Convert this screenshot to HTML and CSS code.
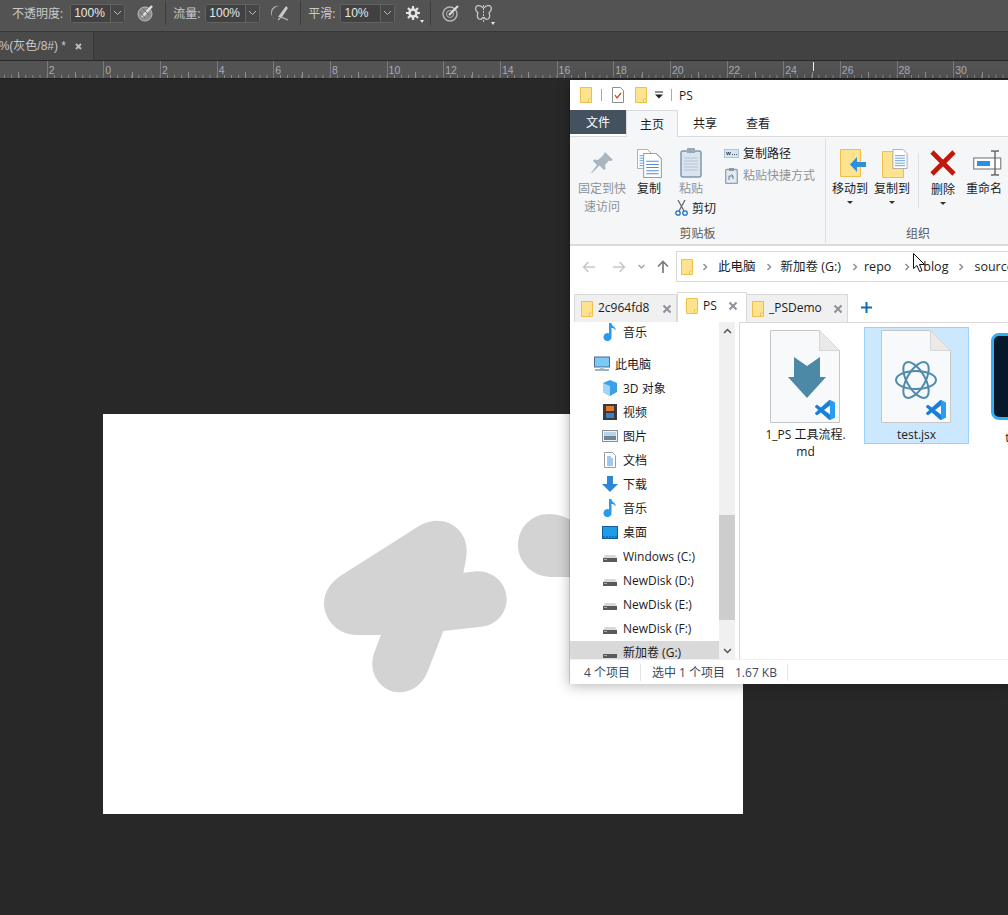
FILE: index.html
```html
<!DOCTYPE html>
<html lang="zh-CN">
<head>
<meta charset="utf-8">
<title>PS</title>
<link rel="stylesheet" href="styles.css">
</head>
<body>
<svg class="defs" width="0" height="0" aria-hidden="true">
  <symbol id="folder" viewBox="0 0 12 16"><path d="M.5.5h11v15H.5z" fill="#fde28f" stroke="#eec04a"/><path d="M8.5 15.5v-3.5h3" fill="#fff2c4" stroke="#eec04a"/></symbol>
  <symbol id="vsc" viewBox="0 0 24 24"><path fill="#1b7fd8" d="M23.15 2.587L18.21.21a1.494 1.494 0 0 0-1.705.29l-9.46 8.63-4.12-3.128a.999.999 0 0 0-1.276.057L.327 7.261A1 1 0 0 0 .326 8.74L3.899 12 .326 15.26a1 1 0 0 0 .001 1.479L1.65 17.94a.999.999 0 0 0 1.276.057l4.12-3.128 9.46 8.63a1.492 1.492 0 0 0 1.704.29l4.942-2.377A1.5 1.5 0 0 0 24 20.06V3.939a1.5 1.5 0 0 0-.85-1.352zm-5.146 14.861L10.826 12l7.178-5.448v10.896z"/><path fill="#2a9df0" d="M18 .1l5.2 2.5c.5.3.8.8.8 1.35v16.1c0 .55-.3 1.05-.8 1.35L18 23.9z"/></symbol>
  <symbol id="drive" viewBox="0 0 16 16"><path d="M3 7h10l2 3H1z" fill="#d8d8d8"/><rect x="1" y="10" width="14" height="4" fill="#5a5a5a"/><rect x="2" y="11" width="3" height="1" fill="#aaa"/></symbol>
  <symbol id="note" viewBox="0 0 16 18"><path d="M7 0h2.500c0 3.500 4.500 3.500 4.500 7.500-1.500-2-3-2.500-4.500-2.500v9a4 4 0 1 1-2.500-3.600z" fill="#2a9bea"/></symbol>
  <symbol id="closex" viewBox="0 0 10 10"><path d="M1.500 1.500l7 7m0-7l-7 7" stroke="#8b9199" stroke-width="2" fill="none"/></symbol>
  <symbol id="chev" viewBox="0 0 6 8"><path d="M1.500 1l3 3-3 3" stroke="#8a8a8a" stroke-width="1.400" fill="none"/></symbol>
  <symbol id="page" viewBox="0 0 70 93"><path d="M.5.5h49l20 20v72H.5z" fill="#f8f9fa" stroke="#c4c7c9"/><path d="M49.500.5v20h20z" fill="#e9e9e9" stroke="#d6d6d6"/></symbol>
  <symbol id="lines" viewBox="0 0 18 24"><path d="M.5.500h12l5 5v18H.5z" fill="#fff" stroke="#9a9da0"/><path d="M3 8h12M3 11h12M3 14h12M3 17h12M3 20h12" stroke="#4f8fd6"/></symbol>
</svg>

<div class="app">
  <div class="options">
    <span class="opt-label first">不透明度:</span>
    <span class="combo"><span class="combo-val">100%</span><span class="combo-arrow"><svg width="9" height="6" viewBox="0 0 9 6"><path d="M1 1l3.500 3.500L8 1" stroke="#bbb" fill="none"/></svg></span></span>
    <svg class="tool i-a" width="18" height="18" viewBox="0 0 18 18"><circle cx="8" cy="10" r="7" fill="#8b8b8b" stroke="#bdbdbd"/><path d="M5 13L15 2" stroke="#e0e0e0" stroke-width="2.500"/><path d="M3 8l5 6M6 5l6 6" stroke="#666"/></svg>
    <span class="opt-sep s-a"></span>
    <span class="opt-label">流量:</span>
    <span class="combo"><span class="combo-val">100%</span><span class="combo-arrow"><svg width="9" height="6" viewBox="0 0 9 6"><path d="M1 1l3.500 3.500L8 1" stroke="#bbb" fill="none"/></svg></span></span>
    <svg class="tool i-b" width="19" height="18" viewBox="0 0 19 18"><path d="M8 2a8 8 0 0 0-6 12l3 1a6 6 0 0 1 3-13z" fill="#a8a8a8"/><path d="M7 13L15 2l2 2-6 9z" fill="#c8c8c8"/><path d="M7 16l3-3 7 3" stroke="#bbb" stroke-width="1.300" fill="none"/></svg>
    <span class="opt-sep s-b"></span>
    <span class="opt-label">平滑:</span>
    <span class="combo"><span class="combo-val">10%</span><span class="combo-arrow"><svg width="9" height="6" viewBox="0 0 9 6"><path d="M1 1l3.500 3.500L8 1" stroke="#bbb" fill="none"/></svg></span></span>
    <span class="gear">
      <svg width="14" height="14" viewBox="0 0 14 14"><circle cx="7" cy="7" r="3.500" fill="none" stroke="#e4e4e4" stroke-width="2.600"/><path d="M7 0v3M7 11v3M0 7h3M11 7h3M2 2l2 2M10 10l2 2M12 2l-2 2M4 10l-2 2" stroke="#e4e4e4" stroke-width="2.200"/></svg>
      <i class="tri"></i>
    </span>
    <span class="opt-sep s-c"></span>
    <svg class="tool i-c" width="18" height="18" viewBox="0 0 18 18"><circle cx="8" cy="10" r="7" fill="none" stroke="#b5b5b5" stroke-width="1.500"/><circle cx="8" cy="10" r="3.500" fill="none" stroke="#b5b5b5"/><path d="M7 11L16 2" stroke="#dcdcdc" stroke-width="2.200"/></svg>
    <span class="butterfly">
      <svg width="17" height="17" viewBox="0 0 17 17"><path d="M8 3C6 0 2 0 1 2s1 5 2 6c-1 2-1 5 1 6s3 0 4-2M9 3c2-3 6-3 7-1s-1 5-2 6c1 2 1 5-1 6s-3 0-4-2" fill="none" stroke="#c4c4c4" stroke-width="1.300"/><path d="M8.500 0v17" stroke="#c4c4c4" stroke-dasharray="2 1"/></svg>
      <i class="tri"></i>
    </span>
  </div>

  <div class="doc-tabs">
    <div class="doc-tab"><span class="doc-tab-name">%(灰色/8#) *</span><svg class="doc-close" width="7" height="7" viewBox="0 0 7 7"><path d="M1 1l5 5m0-5L1 6" stroke="#bdbdbd" stroke-width="1.800"/></svg></div>
  </div>

  <div class="ruler">
    <span class="tick"></span><span class="tick"><b>2</b></span><span class="tick"><b>0</b></span><span class="tick"><b>2</b></span><span class="tick"><b>4</b></span><span class="tick"><b>6</b></span><span class="tick"><b>8</b></span><span class="tick"><b>10</b></span><span class="tick"><b>12</b></span><span class="tick"><b>14</b></span><span class="tick"><b>16</b></span><span class="tick"><b>18</b></span><span class="tick"><b>20</b></span><span class="tick"><b>22</b></span><span class="tick"><b>24</b></span><span class="tick"><b>26</b></span><span class="tick"><b>28</b></span><span class="tick"><b>30</b></span>
    <i class="ruler-mark"></i>
  </div>

  <div class="pasteboard">
    <div class="artboard">
      <svg class="art" width="640" height="400" viewBox="103 414 640 400">
        <path fill="#d3d3d3" d="M341.700 575L410 531.700C418 526 427 520.700 436.700 520.700C454 520.700 466.700 534 466.700 550C466.700 558 465 565 463.300 572.700L476.700 571.300C494 571 506.700 584 506.700 599.300C506.700 614 495 625.500 481.700 626.700L443.300 631L428.300 670C423 684 412 692.300 399.300 692.300C384 692.300 372.300 679 372.300 663.300C372.300 660 373 656.500 374 653.300L381 635H356.700C338 635 324 620 324 603.300C324 592 331 582 341.700 575Z"/>
        <path fill="#d3d3d3" d="M518 545C518 527 532 514 549 514C558 514 566 517 572 521L600 560V577H552C532 577 518 562 518 545Z"/>
      </svg>
    </div>
  </div>
</div>

<section class="explorer">
  <div class="titlebar">
    <svg class="ti ti-1" width="12" height="16"><use href="#folder"/></svg>
    <i class="t-sep"></i>
    <svg class="ti ti-2" width="12" height="16" viewBox="0 0 12 16"><path d="M.5.500h8l3 3v12H.5z" fill="#fff" stroke="#8e8e8e"/><path d="M3 8l2 3 4-5" stroke="#d0441f" stroke-width="1.300" fill="none"/></svg>
    <svg class="ti ti-3" width="12" height="16"><use href="#folder"/></svg>
    <svg class="ti ti-4" width="8" height="8" viewBox="0 0 8 8"><path d="M0 1h8" stroke="#222"/><path d="M0 3.500h8L4 7.500z" fill="#222"/></svg>
    <i class="t-sep s2"></i>
    <span class="wtitle">PS</span>
  </div>

  <div class="menutabs">
    <span class="mt file">文件</span>
    <span class="mt active">主页</span>
    <span class="mt share">共享</span>
    <span class="mt view">查看</span>
  </div>

  <div class="ribbon">
    <div class="group g-clip">
      <div class="group-body">
        <div class="big pin dim">
          <span class="big-icon"><svg width="22" height="22" viewBox="0 0 22 22"><path d="M14 0l8 8-2 1-2-.500-4 4.500 .500 4-1.500 1-4.500-4.500L1 21l-1 0 6-8-4-4 1-1.500 4 .500 4.500-4L13 2z" fill="#a9b5bf"/></svg></span>
          <span class="big-text">固定到快<br>速访问</span>
        </div>
        <div class="big copy">
          <span class="big-icon"><svg width="25" height="29" viewBox="0 0 25 29"><use href="#lines" x="0" y="0" width="15" height="20"/><use href="#lines" x="6" y="4" width="19" height="25"/></svg></span>
          <span class="big-text">复制</span>
        </div>
        <div class="paste-col">
          <div class="big paste dim">
            <span class="big-icon"><svg width="22" height="30" viewBox="0 0 22 30"><rect x="1" y="3" width="20" height="26" rx="2" fill="#dbe4ee" stroke="#7f97b0" stroke-width="1.500"/><rect x="7" y="0" width="8" height="5" fill="#9aa9b8"/><path d="M4 10h14M4 13h14M4 16h14M4 19h14M4 22h14" stroke="#b3c3d6"/></svg></span>
            <span class="big-text">粘贴</span>
          </div>
          <div class="cut">
            <svg width="13" height="16" viewBox="0 0 13 16"><path d="M3 0l6 11M10 0L4 11" stroke="#6a6a6a" stroke-width="1.300"/><circle cx="3" cy="13" r="2.200" fill="none" stroke="#1f6fc4" stroke-width="1.300"/><circle cx="10" cy="13" r="2.200" fill="none" stroke="#1f6fc4" stroke-width="1.300"/></svg>
            <span>剪切</span>
          </div>
        </div>
        <div class="small-col">
          <div class="small"><svg width="15" height="9" viewBox="0 0 15 9"><rect x=".5" y=".5" width="14" height="8" fill="#cfe6f8" stroke="#a9c4dc"/><path d="M2.500 3l1 3 1-3 1 3 1-3M8 5.500h1M10 5.500h1M12 5.500h1" stroke="#333" fill="none" stroke-width=".8"/></svg><span>复制路径</span></div>
          <div class="small dim"><svg width="13" height="16" viewBox="0 0 13 16"><rect x=".7" y="1.500" width="11.600" height="14" rx="1" fill="#e3e9ef" stroke="#8ea3b6" stroke-width="1.300"/><rect x="4" y="0" width="5" height="3" fill="#8a9aaa"/><path d="M4 12V8h4l-1.500-1.500M8 8v3" stroke="#5f7f9f" fill="none"/></svg><span>粘贴快捷方式</span></div>
        </div>
      </div>
      <div class="group-label">剪贴板</div>
    </div>
    <div class="group g-org">
      <div class="group-body">
        <div class="big move">
          <span class="big-icon"><svg width="26" height="28" viewBox="0 0 26 28"><path d="M.5.500h20v27H.5z" fill="#fde28f" stroke="#eec04a"/><path d="M26 13h-9V8L10 15.500 17 23v-5h9z" fill="#2e8fdc"/></svg></span>
          <span class="big-text">移动到</span><i class="caret"></i>
        </div>
        <div class="big copyto">
          <span class="big-icon"><svg width="26" height="29" viewBox="0 0 26 29"><path d="M.5 2.500h21v26H.5z" fill="#fde28f" stroke="#eec04a"/><use href="#lines" x="10" y="0" width="16" height="20"/></svg></span>
          <span class="big-text">复制到</span><i class="caret"></i>
        </div>
        <i class="org-sep"></i>
        <div class="big del">
          <span class="big-icon"><svg width="26" height="26" viewBox="0 0 26 26"><path d="M2 2l22 22M24 2L2 24" stroke="#c2170c" stroke-width="4.600"/></svg></span>
          <span class="big-text">删除</span><i class="caret"></i>
        </div>
        <div class="big rename">
          <span class="big-icon"><svg width="29" height="26" viewBox="0 0 29 26"><rect x=".7" y="8" width="27" height="11" fill="#fff" stroke="#8f8f8f" stroke-width="1.300"/><rect x="4" y="11" width="13" height="5" fill="#2e8fdc"/><path d="M18 1h3l1 1 1-1h3M22 2v22M18 25h3l1-1 1 1h3" stroke="#666" stroke-width="1.400" fill="none"/></svg></span>
          <span class="big-text">重命名</span>
        </div>
      </div>
      <div class="group-label">组织</div>
    </div>
  </div>

  <div class="addressrow">
    <svg class="nav-a back" width="14" height="12" viewBox="0 0 14 12"><path d="M13 6H2M6.500 1L1.500 6l5 5" stroke="#c6c6c6" stroke-width="1.500" fill="none"/></svg>
    <svg class="nav-a fwd" width="14" height="12" viewBox="0 0 14 12"><path d="M1 6h11M7.500 1l5 5-5 5" stroke="#c6c6c6" stroke-width="1.500" fill="none"/></svg>
    <svg class="nav-a dn" width="7" height="5" viewBox="0 0 7 5"><path d="M.5 1l3 3 3-3" stroke="#9a9a9a" stroke-width="1.200" fill="none"/></svg>
    <svg class="nav-a up" width="12" height="13" viewBox="0 0 12 13"><path d="M6 13V2M1 6.500l5-5 5 5" stroke="#7b7b7b" stroke-width="1.700" fill="none"/></svg>
    <div class="addr">
      <svg class="addr-folder" width="12" height="16"><use href="#folder"/></svg>
      <svg class="c c1" width="6" height="8"><use href="#chev"/></svg><span class="crumb">此电脑</span>
      <svg class="c c2" width="6" height="8"><use href="#chev"/></svg><span class="crumb">新加卷 (G:)</span>
      <svg class="c c3" width="6" height="8"><use href="#chev"/></svg><span class="crumb">repo</span>
      <svg class="c c4" width="6" height="8"><use href="#chev"/></svg><span class="crumb">blog</span>
      <svg class="c c5" width="6" height="8"><use href="#chev"/></svg><span class="crumb">source</span>
    </div>
  </div>

  <div class="filetabs">
    <div class="ft ft1"><svg width="12" height="16"><use href="#folder"/></svg><span>2c964fd8</span><svg class="x" width="10" height="10"><use href="#closex"/></svg></div>
    <div class="ft ft2 on"><svg width="12" height="16"><use href="#folder"/></svg><span>PS</span><svg class="x" width="10" height="10"><use href="#closex"/></svg></div>
    <div class="ft ft3"><svg width="12" height="16"><use href="#folder"/></svg><span>_PSDemo</span><svg class="x" width="10" height="10"><use href="#closex"/></svg></div>
    <svg class="plus" width="11" height="11" viewBox="0 0 11 11"><path d="M5.500 0v11M0 5.500h11" stroke="#0f6cb4" stroke-width="2"/></svg>
  </div>

  <div class="main">
    <nav class="navpane">
      <div class="tree">
        <div class="row l2 first"><svg width="16" height="18"><use href="#note"/></svg><span>音乐</span></div>
        <div class="row l1"><svg width="16" height="16" viewBox="0 0 16 16"><rect x=".5" y="1" width="15" height="10" fill="#7cc9f5" stroke="#4a6f8c"/><rect x="1" y="13" width="14" height="2" fill="#9db3c4"/><rect x="6" y="11" width="4" height="2" fill="#b5c4d0"/></svg><span>此电脑</span></div>
        <div class="row l2"><svg width="16" height="16" viewBox="0 0 16 16"><path d="M8 0l7 3v9l-7 4-7-4V3z" fill="#3aa0e8"/><path d="M1 3l7 3v10l-7-4z" fill="#9fd6f7"/></svg><span>3D 对象</span></div>
        <div class="row l2"><svg class="vid" width="14" height="16" viewBox="0 0 14 16"><rect width="14" height="16" fill="#3b3b3b"/><rect x="3" y="2" width="8" height="5" fill="#e07b2e"/><rect x="3" y="9" width="8" height="5" fill="#3f7fc0"/></svg><span>视频</span></div>
        <div class="row l2"><svg width="16" height="12" viewBox="0 0 16 12"><rect x=".5" y=".5" width="15" height="11" fill="#eef3f7" stroke="#8e8e8e"/><rect x="2" y="2" width="12" height="4" fill="#b7d5ea"/><rect x="2" y="6" width="12" height="4" fill="#6f8594"/></svg><span>图片</span></div>
        <div class="row l2"><svg class="narrow" width="12" height="16" viewBox="0 0 12 16"><path d="M.5.500h8l3 3v12H.5z" fill="#fff" stroke="#9a9da0"/><path d="M3 5h4M3 7h6M3 9h6M3 11h6M3 13h6" stroke="#3f93dc"/></svg><span>文档</span></div>
        <div class="row l2"><svg width="16" height="16" viewBox="0 0 16 16"><path d="M5 0h6v8h5l-8 8-8-8h5z" fill="#2f86d8"/></svg><span>下载</span></div>
        <div class="row l2"><svg width="16" height="18"><use href="#note"/></svg><span>音乐</span></div>
        <div class="row l2"><svg width="16" height="13" viewBox="0 0 16 13"><rect x=".5" y=".5" width="15" height="12" fill="#1f9be8" stroke="#0f5f9f"/><path d="M1 11h14" stroke="#0b5488" stroke-dasharray="2 1"/></svg><span>桌面</span></div>
        <div class="row l2"><svg width="16" height="16"><use href="#drive"/></svg><span>Windows (C:)</span></div>
        <div class="row l2"><svg width="16" height="16"><use href="#drive"/></svg><span>NewDisk (D:)</span></div>
        <div class="row l2"><svg width="16" height="16"><use href="#drive"/></svg><span>NewDisk (E:)</span></div>
        <div class="row l2"><svg width="16" height="16"><use href="#drive"/></svg><span>NewDisk (F:)</span></div>
        <div class="row l2 sel"><svg width="16" height="16"><use href="#drive"/></svg><span>新加卷 (G:)</span></div>
      </div>
      <div class="scrollbar">
        <span class="sb-arrow"><svg width="9" height="6" viewBox="0 0 9 6"><path d="M1 5l3.500-3.500L8 5" stroke="#555" stroke-width="1.500" fill="none"/></svg></span>
        <span class="sb-space"></span>
        <span class="sb-thumb"></span>
        <span class="sb-fill"></span>
        <span class="sb-arrow"><svg width="9" height="6" viewBox="0 0 9 6"><path d="M1 1l3.500 3.500L8 1" stroke="#555" stroke-width="1.500" fill="none"/></svg></span>
      </div>
    </nav>
    <div class="files">
      <figure class="tile">
        <div class="thumb">
          <svg width="70" height="93"><use href="#page"/></svg>
          <svg class="glyph" width="38" height="41" viewBox="0 0 38 41"><path d="M6 0l13 9L32 0v20h6L19 41 0 20h6z" fill="#4c89a6"/></svg>
          <svg class="badge" width="20" height="20"><use href="#vsc"/></svg>
        </div>
        <figcaption>1_PS 工具流程.<br>md</figcaption>
      </figure>
      <figure class="tile selected">
        <div class="thumb">
          <svg width="70" height="93"><use href="#page"/></svg>
          <svg class="glyph atom" width="42" height="42" viewBox="0 0 42 42"><g fill="none" stroke="#4f8bab" stroke-width="2"><ellipse cx="21" cy="21" rx="20" ry="9"/><ellipse cx="21" cy="21" rx="20" ry="9" transform="rotate(60 21 21)"/><ellipse cx="21" cy="21" rx="20" ry="9" transform="rotate(120 21 21)"/></g></svg>
          <svg class="badge" width="20" height="20"><use href="#vsc"/></svg>
        </div>
        <figcaption>test.jsx</figcaption>
      </figure>
      <figure class="tile">
        <div class="thumb"><span class="psd"></span></div>
        <figcaption>test.psd</figcaption>
      </figure>
    </div>
  </div>

  <footer class="status">
    <span class="st st1">4 个项目</span>
    <span class="st st2">选中 1 个项目</span>
    <span class="st st3">1.67 KB</span>
  </footer>
</section>

<svg class="cursor" width="13" height="20" viewBox="0 0 13 20"><path d="M.5.500v15l3.500-3 2.500 6 2.500-1-2.500-6h5z" fill="#fff" stroke="#111"/></svg>
</body>
</html>
```

FILE: styles.css
```css
* { box-sizing: border-box; }
html, body { margin: 0; height: 915px; overflow: hidden; background: #282828; }
body { font: 12px/17px "Open Sans", "Noto Sans CJK SC", sans-serif; position: relative; }
.defs { position: absolute; }
.app { display: grid; grid-template-rows: 32px 29px 18px 1fr; height: 915px; width: 1008px; }

/* options bar */
.options { background: #535353; border-bottom: 1px solid #383838; display: flex; align-items: center; height: 32px; padding-bottom: 5px; color: #cfcfcf; }
.opt-label { font-size: 12px; margin-left: 7px; margin-right: 5px; white-space: nowrap; color: #c9c9c9; }
.opt-label.first { margin-left: 12px; margin-right: 7px; }
.combo { display: flex; width: 55px; height: 19px; border: 1px solid #636363; border-radius: 3px; background: #454545; }
.combo-val { width: 39px; color: #e8e8e8; font: 12px/17px "Liberation Sans", sans-serif; padding-left: 3px; background: #414141; border-radius: 2px 0 0 2px; }
.combo-arrow { flex: 1; border-left: 1px solid #636363; display: flex; align-items: center; justify-content: center; background: #474747; }
.tool { flex: none; }
.i-a { margin-left: 12px; }
.s-a { margin-left: 10px; }
.i-b { margin-left: 11px; }
.s-b { margin-left: 10px; }
.opt-sep { width: 1px; height: 24px; background: #3d3d3d; flex: none; }
.gear { position: relative; margin-left: 11px; display: flex; width: 15px; }
.tri { position: absolute; right: -3px; bottom: -3px; border: 2px solid transparent; border-top: 3px solid #e8e8e8; border-bottom: 0; }
.s-c { margin-left: 9px; }
.i-c { margin-left: 11px; }
.butterfly { position: relative; margin-left: 15px; display: flex; width: 17px; }

/* doc tab */
.doc-tabs { background: #424242; border-bottom: 1px solid #272727; height: 29px; }
.doc-tab { width: 94px; height: 28px; background: #4a4a4a; border-right: 1px solid #383838; display: flex; align-items: center; justify-content: flex-end; padding-right: 11px; overflow: hidden; white-space: nowrap; color: #c8c8c8; }
.doc-tab-name { font: 12px/16px "Liberation Sans", "Noto Sans CJK SC", sans-serif; margin-right: 9px; }
.doc-close { flex: none; }

/* ruler */
.ruler { background: #535353; border-bottom: 1px solid #222; display: flex; height: 18px; position: relative; overflow: hidden; }
.tick { flex: none; width: 56.67px; height: 17px; border-left: 1px solid #7a7a7a;
  background-image: linear-gradient(#8d8d8d, #8d8d8d), linear-gradient(90deg, #8d8d8d 1px, transparent 1px);
  background-size: 1px 6px, 7.08px 3px;
  background-position: 27.4px 100%, 6.1px 100%;
  background-repeat: no-repeat, repeat-x;
  color: #a9a9b8; font: 10.500px/13px "Liberation Sans", sans-serif; padding: 3px 0 0 1px; }
.tick:first-child { margin-left: -10px; }
.tick b { font-weight: 400; }
.ruler-mark { position: absolute; left: 813px; top: 1px; width: 1px; height: 9px; background: #eee; }

/* canvas */
.pasteboard { background: #282828; position: relative; }
.artboard { position: absolute; left: 103px; top: 335px; width: 640px; height: 400px; background: #fff; }
.art { display: block; }

/* explorer */
.explorer { position: absolute; left: 569px; top: 80px; width: 439px; height: 604px; background: #fff; border-left: 1px solid rgba(0,0,0,.12); background-clip: padding-box; box-shadow: 0 2px 12px rgba(0,0,0,.28); display: flex; flex-direction: column; color: #1c1c1c; }
.titlebar { height: 30px; display: flex; align-items: center; padding-left: 10px; flex: none; }
.t-sep { width: 1px; height: 12px; background: #a9a9a9; margin-left: 9px; }
.ti-2 { margin-left: 10px; }
.ti-3 { margin-left: 11px; }
.ti-4 { margin-left: 8px; }
.s2 { margin-left: 8px; }
.wtitle { margin-left: 7px; }
.menutabs { height: 27px; display: flex; align-items: stretch; border-bottom: 1px solid #dadbdc; flex: none; }
.mt { display: flex; align-items: center; justify-content: center; width: 52px; }
.mt.file { width: 56px; background: #44525f; color: #fff; height: 24px; }
.mt.active { background: #f5f6f7; border: 1px solid #dadbdc; border-bottom: 0; height: 27px; margin-bottom: -1px; position: relative; }
.mt.share { width: 54px; }
.mt.view { width: 52px; }
.ribbon { height: 109px; background: #f5f6f7; border-bottom: 2px solid #dadbdc; display: flex; flex: none; }
.group { display: flex; flex-direction: column; height: 105px; margin-top: 1px; flex: none; }
.group-body { flex: 1; display: flex; align-items: flex-start; padding-top: 8px; }
.group-label { height: 19px; text-align: center; color: #5b5b5b; line-height: 19px; }
.g-clip { width: 256px; border-right: 1px solid #dfe0e1; }
.g-org { width: 184px; }
.big { display: flex; flex-direction: column; align-items: center; flex: none; white-space: nowrap; }
.big-icon { height: 34px; display: flex; align-items: center; justify-content: center; }
.big-text { text-align: center; line-height: 17.500px; }
.dim, .dim .big-text { color: #8d9297; }
.pin { width: 48px; margin-left: 8px; }
.copy { width: 26px; margin-left: 10px; }
.paste-col { margin-left: 13px; width: 49px; display: flex; flex-direction: column; }
.paste { width: 30px; margin-left: 1px; }
.cut { display: flex; align-items: center; gap: 4px; margin-top: 2px; }
.small-col { display: flex; flex-direction: column; gap: 5px; margin-top: -1px; }
.small { display: flex; align-items: center; gap: 4px; white-space: nowrap; height: 17px; }
.small svg { width: 15px; }
.caret { width: 0; height: 0; border: 3px solid transparent; border-top: 3px solid #333; border-bottom: 0; margin-top: 3px; }
.move { width: 36px; margin-left: 6px; }
.copyto { width: 36px; margin-left: 6px; }
.move .big-icon, .copyto .big-icon { padding-left: 6px; }
.org-sep { width: 1px; height: 55px; background: #dfe0e1; margin: 7px 11px 0 8px; }
.del { width: 26px; }
.del .big-text { margin-top: 1px; }
.rename { width: 36px; margin-left: 10px; }
.rename .big-icon { padding-left: 6px; }
.addressrow { height: 45px; display: flex; align-items: center; flex: none; padding-bottom: 4px; }
.back { margin-left: 12px; }
.fwd { margin-left: 16px; }
.dn { margin-left: 12px; }
.up { margin-left: 12px; }
.addr { margin-left: 7px; flex: 1; height: 31px; border: 1px solid #d9d9d9; border-right: 0; display: flex; align-items: center; padding-left: 4px; white-space: nowrap; overflow: hidden; font-size: 12.500px; }
.addr-folder { flex: none; }
.c { flex: none; }
.c1 { margin: 0 10px 0 9px; }
.c2 { margin: 0 9px 0 10px; }
.c3 { margin: 0 6px 0 11px; }
.c4 { margin: 0 13px 0 13px; }
.c5 { margin: 0 10px 0 10px; }
.filetabs { height: 31px; display: flex; align-items: flex-end; flex: none; padding-left: 4px; }
.ft { display: flex; align-items: center; background: #f0f0f0; border: 1px solid #d9d9d9; border-bottom: 0; height: 28px; padding-left: 6px; white-space: nowrap; }
.ft span { margin: -2px 0 0 5px; }
.ft1 { width: 103px; }
.ft1 .x { margin-left: 13px; }
.ft2 { width: 70px; height: 30px; background: #fff; padding-left: 8px; padding-bottom: 3px; }
.ft2 .x { margin-left: 11px; }
.ft3 { width: 102px; margin-left: -1px; padding-left: 5px; }
.ft3 .x { margin-left: 11px; }
.plus { margin: 0 0 9px 13px; }
.main { flex: 1; display: flex; min-height: 0; }
.navpane { width: 165px; flex: none; display: flex; overflow: hidden; }
.tree { width: 149px; flex: none; overflow: hidden; }
.row { height: 24px; display: flex; align-items: center; white-space: nowrap; }
.row svg { flex: none; }
.row span { margin-left: 5px; }
.row.first { margin-top: -2px; margin-bottom: 8px; }
.l1 { padding-left: 24px; }
.l2 { padding-left: 32px; }
.row .narrow { margin: 0 2px; }
.row .vid { margin: 0 1px; }
.sel { background: linear-gradient(#fff 1px, #d9d9d9 1px); }
.scrollbar { width: 16px; background: #f0f0f0; display: flex; flex-direction: column; flex: none; }
.sb-arrow { height: 17px; display: flex; align-items: center; justify-content: center; flex: none; }
.sb-space { height: 176px; }
.sb-thumb { height: 105px; background: #cdcdcd; }
.sb-fill { flex: 1; }
.files { flex: 1; border-left: 1px solid #d9d9d9; border-top: 1px solid #d9d9d9; margin-left: 4px; display: flex; gap: 6px; align-items: flex-start; padding: 4px 0 0 13px; overflow: hidden; }
.tile { margin: 0; width: 105px; flex: none; border: 1px solid transparent; text-align: center; padding-top: 2px; }
.tile.selected { background: #cce8ff; border-color: #99d1ff; height: 117px; }
.thumb { width: 70px; height: 93px; margin: 0 0 3px 16px; position: relative; }
.thumb > svg:first-child { display: block; }
.glyph { position: absolute; left: 18px; top: 27px; }
.atom { left: 14px; top: 29px; }
.badge { position: absolute; left: 45px; top: 70px; }
.psd { display: block; width: 70px; height: 87px; margin: 3px 0 0 -1px; background: #06192a; border: 3px solid #2fb0f5; border-radius: 8px; }
figcaption { line-height: 17px; }
.status { height: 25px; border-top: 1px solid #f0f0f0; display: flex; align-items: center; flex: none; color: #3a4a5c; white-space: nowrap; }
.st1 { margin-left: 14px; width: 57px; border-right: 1px solid #e6e6e6; }
.st2 { margin-left: 11px; width: 83px; }
.st3 { width: 53px; border-right: 1px solid #e6e6e6; }
.cursor { position: absolute; left: 913px; top: 253px; }
```
